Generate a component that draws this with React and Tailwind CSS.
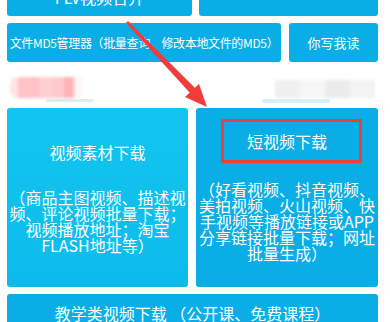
export default function App() {
  return (
    <div className="relative w-[390px] h-[322px] overflow-hidden bg-white text-white font-['Noto_Sans_CJK_SC',sans-serif]">
      <div className="mt-[-23px] pl-[7px] pr-[12px] flex flex-col">
        {/* Row 1 */}
        <div className="flex gap-[7px] h-[39px]">
          <div className="w-[185px] rounded-[3px] bg-[#0aaee7] flex items-center justify-center text-[16px] leading-[16px]">
            FLV视频合并
          </div>
          <div className="flex-1 rounded-[3px] bg-[#0aaee7]" />
        </div>
        {/* Row 2 */}
        <div className="mt-[7px] flex gap-[8px] h-[39px]">
          <div className="w-[274px] rounded-[3px] bg-[#0aaee7] flex items-center justify-center text-[12px] leading-[12px] tracking-[-0.35px] whitespace-nowrap">
            文件MD5管理器（批量查询、修改本地文件的MD5）
          </div>
          <div className="flex-1 rounded-[3px] bg-[#0aaee7] flex items-center justify-center text-[13px] leading-[13px]">
            你写我读
          </div>
        </div>
        {/* Blurred images row */}
        <div className="h-[46px] flex justify-between">
          <div className="flex flex-col mt-[15px] ml-[3px]">
            <div className="flex h-[21px] w-[72px] blur-[1.5px]">
              <div className="w-[8px] bg-[#fde4e6] rounded-l-full" />
              <div className="w-[22px] bg-[#ffc2c6]" />
              <div className="w-[14px] bg-[#ffcfd1]" />
              <div className="w-[12px] bg-[#ffc9cb]" />
              <div className="w-[10px] bg-[#ffb4b9]" />
              <div className="w-[8px] bg-[#fff4f4]" />
            </div>
            <div className="ml-[36px] mt-[1px] h-[3px] w-[48px] bg-[#d4f1fb] rounded-full" />
          </div>
          <div className="flex flex-col mt-[18px] mr-[3px]">
            <div className="flex h-[18px] w-[100px] blur-[1.5px]">
              <div className="w-[25px] bg-[#f0f0f0]" />
              <div className="w-[25px] bg-[#f6f6f6]" />
              <div className="w-[25px] bg-[#ececec]" />
              <div className="w-[25px] bg-[#f3f3f3]" />
            </div>
            <div className="ml-[-13px] mt-[1px] h-[4px] w-[68px] bg-[#d4f1fb] rounded-full" />
          </div>
        </div>
        {/* Cards */}
        <div className="flex gap-[8px] h-[179px]">
          <div className="w-[181px] rounded-[3px] bg-gradient-to-b from-[#12c5f0] to-[#0cbbeb] flex flex-col items-center px-[2px]">
            <div className="mt-[36px] text-[16px] leading-[16px]">视频素材下载</div>
            <div className="mt-[29px] text-[16px] leading-[16px] text-center">
              （商品主图视频、描述视频、评论视频批量下载；视频播放地址；淘宝FLASH地址等）
            </div>
          </div>
          <div className="flex-1 rounded-[3px] bg-[#0aaee7] flex flex-col px-[2px]">
            <div className="mt-[11px] ml-[23px] w-[141px] h-[44px] border-[3px] border-[#f23b3b] flex items-center justify-center pr-[9px] text-[16px] leading-[16px]">
              短视频下载
            </div>
            <div className="mt-[18px] text-[16px] leading-[16px] text-center">
              （好看视频、抖音视频、美拍视频、火山视频、快手视频等播放链接或APP分享链接批量下载；网址批量生成）
            </div>
          </div>
        </div>
        {/* Bottom */}
        <div className="mt-[7px] h-[39px] rounded-[3px] bg-[#0aaee7] pt-[11px] text-center text-[16px] leading-[16px]">
          教学类视频下载 （公开课、免费课程）
        </div>
      </div>
      {/* Red arrow overlay */}
      <svg className="absolute inset-0 pointer-events-none" width="390" height="322" viewBox="0 0 390 322">
        <polygon points="126,23 128,21 196,89 191,94" fill="#f23b3b" />
        <polygon points="207,107 185,97 199,84" fill="#f23b3b" />
      </svg>
    </div>
  );
}
